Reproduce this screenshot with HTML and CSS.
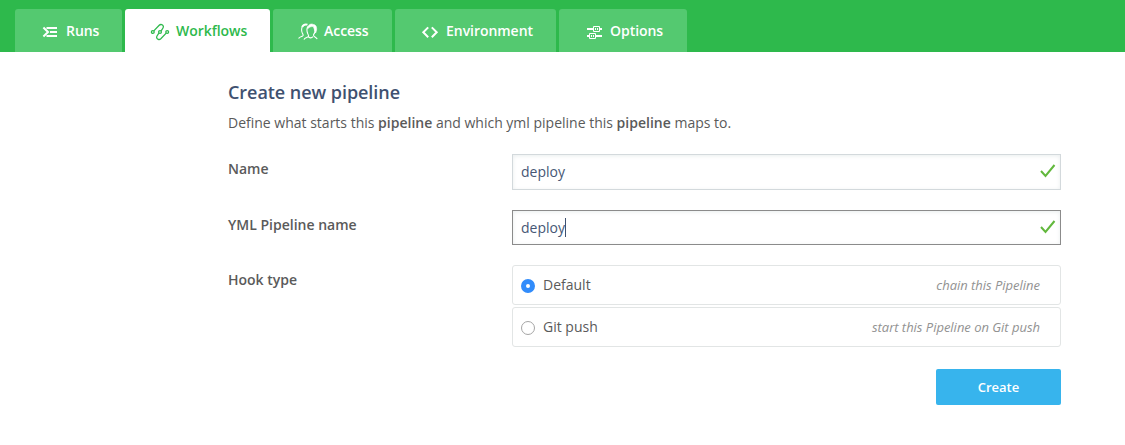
FILE: index.html
```html
<!DOCTYPE html>
<html lang="en">
<head>
<meta charset="utf-8">
<title>Create new pipeline</title>
<link rel="stylesheet" href="styles.css">
</head>
<body>
<nav class="tabs">
  <a class="tab tab-runs"><svg class="icon" width="20" height="20" viewBox="0 0 20 20" fill="none" stroke="currentColor" stroke-width="2"><path d="M3.4 5.5 8 10 3.4 14.5M6.5 6H17M10 10H17M6.5 14H17"/></svg><span>Runs</span></a>
  <a class="tab tab-workflows active"><svg class="icon" width="20" height="20" viewBox="0 0 20 20" fill="none" stroke="currentColor" stroke-width="1.3"><circle cx="2.8" cy="10" r="1.4"/><circle cx="10" cy="10" r="1.4"/><circle cx="17.2" cy="10" r="1.4"/><path d="M3.8 8.9 9.2 3.2C10.7 1.8 13.2 2.6 13.4 4.6 13.5 6.1 12.2 7.2 11.1 8.8M16.2 11.1 10.8 16.8C9.3 18.2 6.8 17.4 6.6 15.4 6.5 13.9 7.8 12.8 8.9 11.2"/></svg><span>Workflows</span></a>
  <a class="tab tab-access"><svg class="icon" width="20" height="20" viewBox="0 0 20 20" fill="none" stroke="currentColor" stroke-width="1.1"><path d="M.6 16.5C1 14.9 3.3 14.6 4.7 13.9 5.7 13.2 5.1 12.2 4.3 11 3.3 9 3.2 5.3 5.1 3.7M6 17.6C6.6 15.8 8.8 15.7 10.2 14.8 11.1 14 10.4 12.7 9.8 11.7 8.8 9.3 8.7 6.1 10.1 4.4M17 7C17.3 9.7 16.8 11.5 15.5 12.6 14.9 15.1 18.4 14.5 19.2 17.2M10.6 15C11.8 16 13.8 16 15 14.7"/><path d="M9.7 6.7C9.6 3.3 12.6 .9 15.7 2.6 18.8 3.1 19.5 7.1 17.6 11L16.5 7.7 15.3 4.6C13.7 4.4 11.6 4.7 9.7 6.7Z" fill="currentColor" stroke-width=".6"/><path d="M4.1 5C5.1 3 7.5 2.2 9.5 2.7" stroke-width="1.8"/></svg><span>Access</span></a>
  <a class="tab tab-environment"><svg class="icon" width="20" height="20" viewBox="0 0 20 20" fill="none" stroke="currentColor" stroke-width="2"><path d="M8.2 5.4 3.3 10.3 8.2 15.2M11.8 5.4 16.7 10.3 11.8 15.2"/></svg><span>Environment</span></a>
  <a class="tab tab-options"><svg class="icon" width="20" height="20" viewBox="0 0 20 20" fill="none" stroke="currentColor"><path d="M3 7H9M16 7H18M3 14H5M12 14H18" stroke-width="2"/><path d="M9.5 4.5H15.5V9.5H9.5ZM5.5 11.5H11.5V16.5H5.5Z"/><path d="M11.5 6V8M13.5 6V8M7.5 13V15M9.5 13V15"/></svg><span>Options</span></a>
</nav>
<main class="panel">
  <h1 class="title">Create new pipeline</h1>
  <p class="intro">Define what starts this <b>pipeline</b> and which yml pipeline this <b>pipeline</b> maps to.</p>
  <div class="row">
    <div class="label">Name</div>
    <div class="field"><span>deploy</span><svg class="check" width="16" height="14" viewBox="0 0 16 14"><path d="M1 7 5.5 12 14.5 1" fill="none" stroke="currentColor" stroke-width="2"/></svg></div>
  </div>
  <div class="row">
    <div class="label">YML Pipeline name</div>
    <div class="field focused"><span>deploy</span><i class="caret"></i><svg class="check" width="16" height="14" viewBox="0 0 16 14"><path d="M1 7 5.5 12 14.5 1" fill="none" stroke="currentColor" stroke-width="2"/></svg></div>
  </div>
  <div class="row hook-row">
    <div class="label">Hook type</div>
    <div class="options">
      <div class="option"><i class="radio selected"></i><span>Default</span><em class="hint">chain this Pipeline</em></div>
      <div class="option"><i class="radio"></i><span>Git push</span><em class="hint">start this Pipeline on Git push</em></div>
    </div>
  </div>
  <div class="actions"><button class="create">Create</button></div>
</main>
</body>
</html>
```
FILE: styles.css
```css
* { box-sizing: border-box; }
body {
  margin: 0;
  background: #fff;
  color: #5a5a5a;
  font: 14px/20px "Open Sans", "Noto Sans", sans-serif;
}
.tabs {
  display: flex;
  gap: 3px;
  height: 52px;
  padding: 9px 15px 0;
  background: #2eb94c;
}
.tab {
  display: flex;
  align-items: flex-start;
  padding: 12px 0 0 25px;
  border-radius: 3px 3px 0 0;
  background: #54c970;
  color: #fff;
  font-weight: 600;
}
.tab span { margin-left: 6px; letter-spacing: -0.04px; white-space: nowrap; }
.icon { flex: none; margin-top: 1px; }
.tab-runs { width: 107px; }
.tab-workflows { width: 145px; }
.tab-access { width: 119px; }
.tab-environment { width: 161px; }
.tab-options { width: 128px; }
.active { background: #fff; color: #2eb94c; }

.panel { width: 833px; margin-left: 228px; padding-top: 28px; }
.title {
  margin: 0;
  color: #3f5170;
  font-size: 18px;
  font-weight: 600;
  line-height: 24px;
  letter-spacing: -0.05px;
}
.intro { margin: 9px 0 21px; }
.intro b { font-weight: 600; }
.row { display: flex; margin-bottom: 20px; }
.label { width: 284px; padding-top: 5px; font-weight: 600; }
.field {
  display: flex;
  align-items: center;
  width: 549px;
  height: 36px;
  padding: 0 4px 0 8px;
  border: 1px solid #d3d9dc;
  box-shadow: inset 0 1px 4px #e9edee;
  color: #465775;
}
.focused { height: 35px; border-color: #8b8b8b; }
.caret { width: 1px; height: 19px; background: #3f5170; }
.check { margin: 0 0 2px auto; color: #62b83d; }
.hook-row { margin-bottom: 22px; }
.options { display: grid; gap: 2px; width: 549px; }
.option {
  display: flex;
  align-items: center;
  height: 40px;
  padding: 0 20px 0 8px;
  border: 1px solid #e2e5e5;
  border-radius: 3px;
}
.radio {
  width: 14px;
  height: 14px;
  margin: 2px 8px 0 0;
  border: 1px solid #a5a5a5;
  border-radius: 50%;
}
.selected { border: 5px solid #318cfb; }
.hint { margin-left: auto; color: #929292; font-size: 13px; letter-spacing: -0.02px; }
.actions { display: flex; justify-content: flex-end; }
.create {
  width: 125px;
  height: 36px;
  padding: 0 0 1px;
  border: 0;
  border-radius: 2px;
  background: #37b4ed;
  color: #fff;
  font: 600 13px/20px "Open Sans", "Noto Sans", sans-serif;
}
```
